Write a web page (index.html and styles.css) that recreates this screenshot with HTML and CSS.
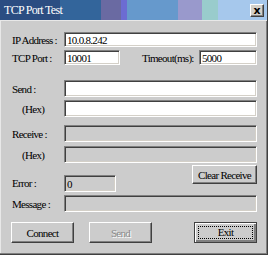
FILE: index.html
```html
<!DOCTYPE html>
<html lang="en">
<head>
  <meta charset="UTF-8">
  <title>TCP Port Test</title>
  <link rel="stylesheet" href="styles.css">
</head>
<body>

  <div class="window">
    <div class="titlebar">
      <span class="title">TCP Port Test</span>
      <button class="close-btn">x</button>
    </div>

    <div class="dialog">
      <div class="row row-ip">
        <label class="lbl">IP Address :</label>
        <input class="field" type="text" value="10.0.8.242">
      </div>
      <div class="row row-port">
        <label class="lbl">TCP Port :</label>
        <input class="field port" type="text" value="10001">
        <label class="lbl-timeout">Timeout(ms):</label>
        <input class="field timeout" type="text" value="5000">
      </div>

      <div class="row row-send">
        <label class="lbl">Send :</label>
        <input class="field tall" type="text">
      </div>
      <div class="row row-send-hex">
        <label class="lbl hex">(Hex)</label>
        <input class="field tall" type="text">
      </div>

      <div class="row row-recv">
        <label class="lbl">Receive :</label>
        <input class="field tall" type="text" disabled>
      </div>
      <div class="row row-recv-hex">
        <label class="lbl hex">(Hex)</label>
        <input class="field tall" type="text" disabled>
      </div>

      <div class="row row-error">
        <label class="lbl">Error :</label>
        <input class="field tall error" type="text" value="0" disabled>
        <button class="btn clear-btn">Clear Receive</button>
      </div>
      <div class="row row-msg">
        <label class="lbl">Message :</label>
        <input class="field tall" type="text" disabled>
      </div>

      <div class="actions">
        <button class="btn">Connect</button>
        <button class="btn send-btn" disabled>Send</button>
        <button class="btn exit-btn"><span class="focus">Exit</span></button>
      </div>
    </div>
  </div>

</body>
</html>
```

FILE: styles.css
```css
body {
  margin: 0;
  background-color: #cccccc;
  font-family: "Liberation Serif", "Times New Roman", serif;
  font-size: 11px;
  letter-spacing: -0.7px;
  color: #000;
}
.window {
  width: 268px;
  height: 255px;
  box-sizing: border-box;
  border-right: 1px solid #404040;
  border-bottom: 1px solid #404040;
  box-shadow: inset -1px -1px 0 #808080, inset 1px 1px 0 #e8e8e8;
}
.titlebar {
  height: 20px;
  display: flex;
  align-items: center;
  padding: 0 3px 0 4px;
  border-bottom: 1px solid #e8e8e8;
  background: linear-gradient(to right,
    #2b4d82 0, #2b4d82 60px,
    #33659b 60px, #33659b 101px,
    #6a6aa2 101px, #6a6aa2 121px,
    #6c6cd2 121px, #6c6cd2 127px,
    #6699cc 127px, #6699cc 178px,
    #9999cc 178px, #9999cc 202px,
    #99cccc 202px, #99cccc 218px,
    #a6c8ec 218px);
}
.title {
  flex: 1;
  color: #fff;
  font-size: 12px;
}
.close-btn {
  width: 14px;
  height: 13px;
  padding: 0;
  margin-top: 1px;
  background-color: #d4d0c8;
  border: 1px solid;
  border-color: #fff #404040 #404040 #fff;
  box-shadow: inset -1px -1px 0 #808080;
  font-family: "DejaVu Sans", sans-serif;
  font-weight: bold;
  font-size: 11px;
  line-height: 9px;
  letter-spacing: 0;
  color: #000;
}
.dialog {
  padding: 11px 10px 0 12px;
}
.row {
  display: flex;
  align-items: center;
}
.lbl {
  width: 52px;
  flex-shrink: 0;
}
.lbl.hex {
  padding-left: 10px;
  width: 42px;
}
.field {
  flex: 1;
  min-width: 0;
  height: 15px;
  box-sizing: border-box;
  margin: 0;
  padding: 0 2px;
  background-color: #fff;
  border: 1px solid;
  border-color: #808080 #fff #fff #808080;
  box-shadow: inset 1px 1px 0 #404040, inset -1px -1px 0 #d4d0c8;
  font-family: inherit;
  font-size: 11px;
  letter-spacing: -0.7px;
  color: #000;
  outline: none;
}
.field.tall {
  height: 17px;
}
.field:disabled {
  background-color: #cccccc;
  color: #000;
}
.field.port {
  flex: none;
  width: 56px;
}
.lbl-timeout {
  margin-left: 22px;
}
.field.timeout {
  flex: none;
  width: 58px;
  margin-left: auto;
}
.row-port {
  margin-top: 3px;
}
.row-send {
  margin-top: 15px;
}
.row-send-hex {
  margin-top: 3px;
}
.row-recv {
  margin-top: 8px;
}
.row-recv-hex {
  margin-top: 4px;
}
.row-error {
  margin-top: 2px;
  height: 27px;
  align-items: flex-end;
}
.row-error .lbl {
  align-self: flex-end;
  line-height: 17px;
}
.field.error {
  flex: none;
  width: 52px;
}
.btn {
  height: 21px;
  box-sizing: border-box;
  padding: 0;
  background-color: #cccccc;
  border: 1px solid;
  border-color: #fff #404040 #404040 #fff;
  box-shadow: inset -1px -1px 0 #808080;
  font-family: inherit;
  font-size: 11px;
  letter-spacing: -0.7px;
  color: #000;
}
.clear-btn {
  align-self: flex-start;
  width: 65px;
  height: 19px;
  margin-left: auto;
}
.row-msg {
  margin-top: 3px;
}
.actions {
  display: flex;
  margin: 10px 0 0 -1px;
}
.actions .btn {
  width: 63px;
}
.send-btn {
  margin-left: 15px;
  color: #8a8a8a;
  text-shadow: 1px 1px 0 #fff;
}
.exit-btn {
  margin-left: auto;
  border-color: #404040;
  box-shadow: inset 1px 1px 0 #fff, inset -2px -2px 0 #808080;
  padding: 3px;
}
.focus {
  display: block;
  height: 100%;
  box-sizing: border-box;
  border: 1px dotted #000;
  line-height: 11px;
}
```
